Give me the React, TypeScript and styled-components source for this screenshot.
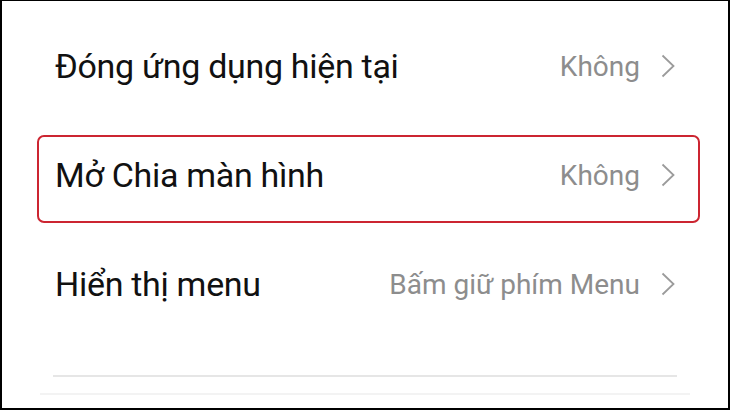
import React from 'react'
import styled, { createGlobalStyle } from 'styled-components'

const GlobalStyle = createGlobalStyle`
    html, body {
        margin: 0;
        padding: 0;
        background: #fff;
    }
    body {
        font-family: Roboto, "Noto Sans", "Liberation Sans", sans-serif;
    }
`

const Screen = styled.div`
    box-sizing: border-box;
    width: 730px;
    height: 410px;
    background: #fff;
    border: 2px solid #000;
    border-top-width: 1px;
    padding: 25px 28px 0 35px;
    display: flex;
    flex-direction: column;
`

const List = styled.div`
    display: flex;
    flex-direction: column;
    gap: 21px;
`

const Row = styled.div<{ $active?: boolean }>`
    box-sizing: border-box;
    height: 88px;
    padding: 0 23px 8px 16px;
    display: flex;
    align-items: center;
    border: 2px solid ${(p) => (p.$active ? '#cc2531' : 'transparent')};
    border-radius: 7px;
`

const Title = styled.div`
    flex: 1;
    font-size: 34px;
    color: #111;
    letter-spacing: -0.3px;
    white-space: nowrap;
`

const Value = styled.div`
    font-size: 28px;
    color: #8d8d8d;
    white-space: nowrap;
`

const Chevron = styled.svg`
    margin-left: 21px;
    flex-shrink: 0;
`

const Divider = styled.div<{ $left: number; $right: number; $tone: string; $top: number }>`
    height: 2px;
    margin: ${(p) => p.$top}px ${(p) => p.$right}px 0 ${(p) => p.$left}px;
    background: ${(p) => p.$tone};
`

const Arrow = () => (
    <Chevron width="14" height="24" viewBox="0 0 14 24">
        <polyline points="1.5,1.5 12.5,12 1.5,22.5" fill="none" stroke="#9b9b9b" strokeWidth="1.8" strokeLinejoin="miter" />
    </Chevron>
)

const settings = [
    { title: 'Đóng ứng dụng hiện tại', value: 'Không' },
    { title: 'Mở Chia màn hình', value: 'Không', active: true },
    { title: 'Hiển thị menu', value: 'Bấm giữ phím Menu' },
]

const App: React.FC = () => {
    return (
        <>
            <GlobalStyle />
            <Screen>
                <List>
                    {settings.map((s) => (
                        <Row key={s.title} $active={s.active}>
                            <Title>{s.title}</Title>
                            <Value>{s.value}</Value>
                            <Arrow />
                        </Row>
                    ))}
                </List>
                <Divider $top={43} $left={16} $right={23} $tone="#e6e6e6" />
                <Divider $top={16} $left={3} $right={10} $tone="#f3f3f3" />
            </Screen>
        </>
    )
}

export default App
